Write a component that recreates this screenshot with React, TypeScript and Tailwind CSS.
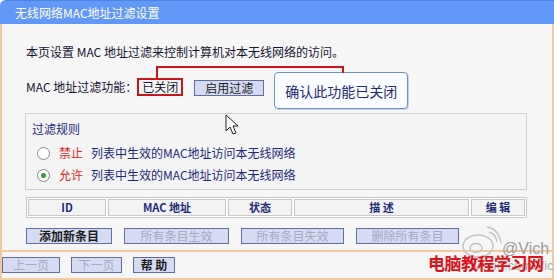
import React from 'react';

const font = { fontFamily: '"Noto Sans CJK SC", "Liberation Sans", sans-serif' };

function Btn({ label, disabled, className = '' }: { label: string; disabled?: boolean; className?: string }) {
  return (
    <div
      className={`flex h-[16px] items-center justify-center border border-[#5f6f9e] bg-[#d6dbf3] text-[12px] leading-none ${
        disabled ? 'text-[#a4a9c6]' : 'font-bold text-[#1b1b1b]'
      } ${className}`}
    >
      {label}
    </div>
  );
}

function Radio({ checked }: { checked?: boolean }) {
  return (
    <span className="flex h-[13px] w-[13px] items-center justify-center rounded-full border border-[#8a8a8a] bg-white">
      {checked && <span className="h-[5px] w-[5px] rounded-full bg-[#3a9a3a]" />}
    </span>
  );
}

export default function App() {
  const cols = [
    { label: 'ID', w: 'w-[78px]' },
    { label: 'MAC 地址', w: 'w-[118px]' },
    { label: '状态', w: 'w-[64px]' },
    { label: '描 述', w: 'w-[175px]' },
    { label: '编 辑', w: 'flex-1' },
  ];

  return (
    <div className="relative h-[280px] w-[554px] overflow-hidden bg-white" style={font}>
      {/* title bar */}
      <div className="flex h-[24px] items-center rounded-tl-[6px] border-t border-[#4f82e6] bg-[#6197f6] pl-[15px] text-[12px] text-white">
        无线网络MAC地址过滤设置
      </div>

      <div className="flex h-[256px] flex-col border-x-2 border-b-2 border-[#f3c9a0] bg-[#f6f6f6]">
        <div className="pl-[24px] pt-[20px] text-[12px] leading-[16px] text-[#151530]">
          本页设置 MAC 地址过滤来控制计算机对本无线网络的访问。
        </div>

        {/* status row */}
        <div className="mt-[11px] flex items-start pl-[24px] text-[12px] leading-[16px] text-[#151530]">
          <span className="mt-[8px]">MAC 地址过滤功能：</span>
          <span className="mt-[7px] flex h-[18px] items-center border-2 border-[#c8161d] px-[3px] text-[#151530]">已关闭</span>
          <Btn label="启用过滤" className="ml-[11px] mt-[9px] w-[70px] font-normal" />
          <div className="ml-[10px] mt-[1px] flex h-[37px] w-[134px] items-center justify-center rounded-[4px] border border-[#6e92c0] bg-[#fafcff] text-[14px] text-[#1e2a78] shadow-[1px_1px_0_#c8d4e6]">
            确认此功能已关闭
          </div>
        </div>

        {/* filter rules */}
        <div className="ml-[23px] mt-[4px] flex h-[77px] w-[502px] flex-col border border-[#cfcfcf] bg-[#f4f4f4] pl-[6px] pt-[7px] text-[12px] leading-[16px] text-[#1e2a78]">
          <span>过滤规则</span>
          <div className="mt-[8px] flex items-center gap-[9px] pl-[5px]">
            <Radio />
            <span className="flex gap-[8px]">
              <span className="text-[#e0251b]">禁止</span>
              <span>列表中生效的MAC地址访问本无线网络</span>
            </span>
          </div>
          <div className="mt-[6px] flex items-center gap-[9px] pl-[5px]">
            <Radio checked />
            <span className="flex gap-[8px]">
              <span className="text-[#e0251b]">允许</span>
              <span>列表中生效的MAC地址访问本无线网络</span>
            </span>
          </div>
        </div>

        {/* table header */}
        <div className="ml-[24px] mt-[7px] flex h-[21px] w-[501px] gap-[2px] border border-[#c9c9c9] bg-white p-[1px]">
          {cols.map((c) => (
            <div
              key={c.label}
              className={`${c.w} flex items-center justify-center border border-[#c9c9c9] bg-[#f3f3f3] text-[11px] font-bold text-[#1e2a78]`}
            >
              {c.label}
            </div>
          ))}
        </div>

        {/* action buttons */}
        <div className="ml-[24px] mt-[10px] flex gap-[12px]">
          <Btn label="添加新条目" className="w-[86px]" />
          <Btn label="所有条目生效" disabled className="w-[105px]" />
          <Btn label="所有条目失效" disabled className="w-[103px]" />
          <Btn label="删除所有条目" disabled className="w-[103px]" />
        </div>

        <div className="mt-[6px] border-t-2 border-[#f3c9a0]" />

        <div className="mt-[5px] flex gap-[11px]">
          <Btn label="上一页" disabled className="w-[58px]" />
          <Btn label="下一页" disabled className="w-[51px]" />
          <Btn label="帮 助" className="w-[42px]" />
        </div>
      </div>

      {/* annotation connector */}
      <svg className="pointer-events-none absolute left-0 top-0" width="554" height="280">
        <polyline points="157,79 157,67 343,67 343,73" fill="none" stroke="#c8161d" strokeWidth="2" />
        {/* mouse cursor */}
        <path
          d="M226 115 L226 131 L230 127 L233 134 L236 133 L233 126 L238 126 Z"
          fill="#ffffff"
          stroke="#222"
          strokeWidth="1"
          strokeLinejoin="round"
        />
        {/* weibo logo */}
        <g fill="none" stroke="#c4c4c4" strokeWidth="1.5">
          <ellipse cx="478" cy="246" rx="15" ry="11" />
          <ellipse cx="476" cy="248" rx="6" ry="4.5" />
          <path d="M489 232 q7 2 8 10" />
          <path d="M487 227 q12 2 14 16" />
        </g>
      </svg>

      {/* watermark */}
      <div className="pointer-events-none absolute left-[502px] top-[241px] text-[16px] leading-none text-[#9a9a9a]" style={{ fontFamily: '"Liberation Sans", sans-serif' }}>
        @Vich
      </div>
      <div className="pointer-events-none absolute left-[470px] top-[259px] text-[13px] leading-none text-[#b0b0b0]" style={{ fontFamily: '"Liberation Sans", sans-serif' }}>
        weibo.com/Vich
      </div>
      <div className="pointer-events-none absolute left-[428px] top-[254px] text-[17px] font-bold leading-none tracking-[-0.5px] text-[#e0101a]">
        电脑教程学习网
      </div>
    </div>
  );
}
